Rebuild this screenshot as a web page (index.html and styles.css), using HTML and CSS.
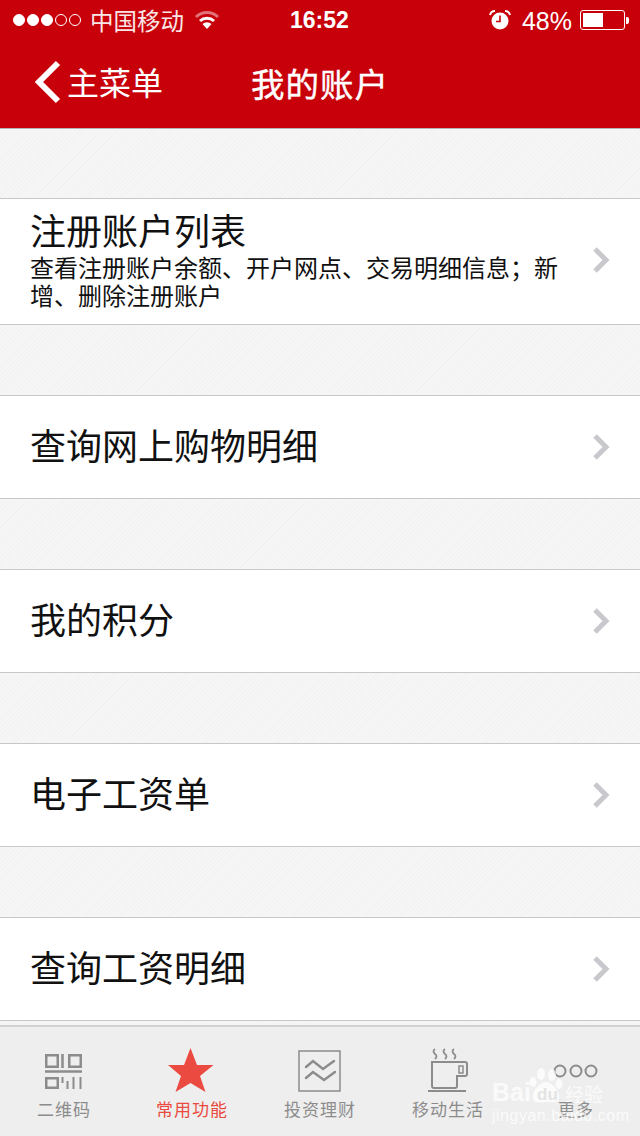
FILE: index.html
```html
<!DOCTYPE html>
<html lang="zh-CN">
<head>
  <meta charset="UTF-8">
  <title>我的账户</title>
  <link rel="stylesheet" href="styles.css">
</head>
<body>
  <div class="app">
    <div class="statusbar">
      <div class="status-left">
        <div class="signal">
          <span class="dot on"></span><span class="dot on"></span><span class="dot on"></span><span class="dot"></span><span class="dot"></span>
        </div>
        <span class="carrier">中国移动</span>
        <svg class="wifi" width="26" height="20" viewBox="0 0 26 20">
          <path d="M2 7 A16 16 0 0 1 24 7" fill="none" stroke="#fff" stroke-opacity="0.45" stroke-width="3"/>
          <path d="M6 11 A10.5 10.5 0 0 1 20 11" fill="none" stroke="#fff" stroke-width="3"/>
          <path d="M13 19 L8.5 14 A6.5 6.5 0 0 1 17.5 14 Z" fill="#fff"/>
        </svg>
      </div>
      <div class="clock">16:52</div>
      <div class="status-right">
        <svg class="alarm" width="22" height="20" viewBox="0 0 22 20">
          <circle cx="11" cy="11" r="8.5" fill="#fff"/>
          <path d="M11 5.5 V11.500 H7" fill="none" stroke="#c8000a" stroke-width="1.6"/>
          <path d="M1 5 Q2 1 6 1 M21 5 Q20 1 16 1" fill="none" stroke="#fff" stroke-width="2"/>
        </svg>
        <span class="percent">48%</span>
        <div class="battery"><div class="battery-fill"></div></div>
        <div class="battery-cap"></div>
      </div>
    </div>

    <div class="navbar">
      <div class="back">
        <svg width="28" height="44" viewBox="0 0 28 44">
          <path d="M25 3 L6 22 L25 41" fill="none" stroke="#fff" stroke-width="6"/>
        </svg>
        <span class="back-label">主菜单</span>
      </div>
      <h1 class="title">我的账户</h1>
    </div>

    <div class="content">
      <div class="row row-tall">
        <div class="row-text">
          <div class="row-title">注册账户列表</div>
          <div class="row-desc">查看注册账户余额、开户网点、交易明细信息；新增、删除注册账户</div>
        </div>
        <svg class="chevron" width="18" height="28" viewBox="0 0 18 28"><path d="M3 3 L14 14 L3 25" fill="none" stroke="#c8c8cd" stroke-width="5"/></svg>
      </div>
      <div class="row">
        <div class="row-title">查询网上购物明细</div>
        <svg class="chevron" width="18" height="28" viewBox="0 0 18 28"><path d="M3 3 L14 14 L3 25" fill="none" stroke="#c8c8cd" stroke-width="5"/></svg>
      </div>
      <div class="row">
        <div class="row-title">我的积分</div>
        <svg class="chevron" width="18" height="28" viewBox="0 0 18 28"><path d="M3 3 L14 14 L3 25" fill="none" stroke="#c8c8cd" stroke-width="5"/></svg>
      </div>
      <div class="row">
        <div class="row-title">电子工资单</div>
        <svg class="chevron" width="18" height="28" viewBox="0 0 18 28"><path d="M3 3 L14 14 L3 25" fill="none" stroke="#c8c8cd" stroke-width="5"/></svg>
      </div>
      <div class="row">
        <div class="row-title">查询工资明细</div>
        <svg class="chevron" width="18" height="28" viewBox="0 0 18 28"><path d="M3 3 L14 14 L3 25" fill="none" stroke="#c8c8cd" stroke-width="5"/></svg>
      </div>
    </div>

    <div class="tabbar">
      <div class="tab">
        <svg class="tab-icon" width="38" height="46" viewBox="0 0 38 46" fill="none" stroke="#8c8c8c" stroke-width="2.5">
          <rect x="1.250" y="7.250" width="11.500" height="11.500"/>
          <rect x="24.250" y="7.250" width="11.500" height="11.500"/>
          <path d="M17.500 6 V20 M0 23.500 H37"/>
          <rect x="1.250" y="30.250" width="11.500" height="9.500"/>
          <path d="M17.500 29 V35 M22.500 33 V41 M28.500 29 V41 M35.500 29 V41" stroke-width="2"/>
        </svg>
        <span class="tab-label">二维码</span>
      </div>
      <div class="tab tab-active">
        <svg class="tab-icon" width="48" height="46" viewBox="0 0 48 46"><path d="M22.500 0 L29 17 L45.500 17 L32 28 L37.500 44 L22.500 35 L7.500 44 L13 28 L0 17 L16 17 Z" fill="#ea4a40"/></svg>
        <span class="tab-label">常用功能</span>
      </div>
      <div class="tab">
        <svg class="tab-icon" width="44" height="46" viewBox="0 0 44 46" fill="none" stroke="#8c8c8c">
          <rect x="1" y="3" width="41" height="40" stroke-width="1.500"/>
          <path d="M8 19 L15 13 L25 21 L36 13 M8 30 L15 24 L26 32 L37 24" stroke-width="2.500" stroke-linecap="round"/>
        </svg>
        <span class="tab-label">投资理财</span>
      </div>
      <div class="tab">
        <svg class="tab-icon" width="40" height="46" viewBox="0 0 40 46" fill="none" stroke="#8c8c8c">
          <path d="M7 1 Q4 3 7 6 Q10 8 7 11 M17 1 Q14 3 17 6 Q20 8 17 11 M26 1 Q23 3 26 6 Q29 8 26 11" stroke-width="1.800"/>
          <path d="M4 14 H37 Q39 14 39 16 V26 Q39 28 37 28 H29 V38 Q29 40 27 40 H6 Q4 40 4 38 Z" stroke-width="2"/>
          <rect x="31" y="18" width="4" height="7" stroke-width="1.500"/>
          <path d="M0 43 H38" stroke-width="2"/>
        </svg>
        <span class="tab-label">移动生活</span>
      </div>
      <div class="tab">
        <svg class="tab-icon" width="48" height="46" viewBox="0 0 48 46" fill="none" stroke="#8c8c8c" stroke-width="2">
          <circle cx="8" cy="23" r="5.500"/><circle cx="24" cy="23" r="5.500"/><circle cx="39" cy="23" r="5.500"/>
        </svg>
        <span class="tab-label">更多</span>
      </div>
      <div class="watermark">
        <div class="wm-top">
          <span class="wm-bai">Bai</span>
          <svg class="wm-paw" width="36" height="36" viewBox="0 0 36 36" fill="#fff" fill-opacity="0.75">
            <ellipse cx="5" cy="14" rx="3.500" ry="5"/>
            <ellipse cx="13" cy="6" rx="4" ry="6"/>
            <ellipse cx="24" cy="7" rx="4" ry="6"/>
            <ellipse cx="31" cy="16" rx="3.500" ry="5"/>
            <path d="M18 14 C24 14 33 24 31 31 C29 36 22 34 18 34 C14 34 7 36 5 31 C3 24 12 14 18 14 Z"/>
          </svg>
          <span class="wm-du">du</span>
          <span class="wm-cn">经验</span>
        </div>
        <div class="wm-url">jingyan.baidu.com</div>
      </div>
    </div>
  </div>
</body>
</html>
```

FILE: styles.css
```css
* {
  box-sizing: border-box;
  margin: 0;
  padding: 0;
}
body {
  width: 640px;
  height: 1136px;
  overflow: hidden;
  font-family: "Liberation Sans", "Noto Sans CJK SC", sans-serif;
}
.app {
  width: 640px;
  height: 1136px;
  display: flex;
  flex-direction: column;
  background: #f1f1f1;
}
.statusbar {
  height: 40px;
  background: #c8000a;
  color: #fff;
  display: flex;
  align-items: center;
  position: relative;
  padding: 0 11px 0 13px;
  justify-content: space-between;
  font-size: 25px;
}
.status-left, .status-right {
  display: flex;
  align-items: center;
}
.signal {
  display: flex;
  gap: 2px;
}
.dot {
  width: 12px;
  height: 12px;
  border-radius: 50%;
  border: 1px solid #fff;
}
.dot.on {
  background: #fff;
}
.carrier {
  margin-left: 9px;
  font-size: 23.5px;
  opacity: 0.9;
}
.wifi {
  margin-left: 10px;
}
.clock {
  font-size: 23px;
  font-weight: bold;
  position: absolute;
  left: 290px;
  top: 7px;
}
.alarm {
  margin-right: 11px;
}
.percent {
  margin-top: 2px;
  margin-right: 8px;
}
.battery {
  width: 45px;
  height: 20px;
  border: 1px solid #fff;
  border-radius: 3px;
  padding: 2px;
}
.battery-fill {
  width: 20px;
  height: 100%;
  background: #fff;
}
.battery-cap {
  width: 3px;
  height: 7px;
  background: #fff;
  margin-left: 1px;
  border-radius: 0 2px 2px 0;
}
.navbar {
  height: 89px;
  background: #c8000a;
  color: #fff;
  border-bottom: 1px solid #b3b3b3;
  position: relative;
  display: flex;
  align-items: center;
  justify-content: center;
}
.back {
  position: absolute;
  left: 33px;
  top: 20px;
  display: flex;
  align-items: center;
  gap: 6px;
}
.back-label {
  font-size: 32px;
  margin-top: -2px;
}
.title {
  font-size: 33.5px;
  font-weight: normal;
  letter-spacing: 1px;
  -webkit-text-stroke: 0.4px #fff;
  margin-bottom: 4px;
}
.content {
  flex: 1;
  overflow: hidden;
  background-color: #f4f4f4;
  background-image: repeating-linear-gradient(135deg, #f2f2f2 0, #f2f2f2 1px, #f6f6f6 1px, #f6f6f6 3px);
  padding-top: 69px;
  border-bottom: 1px solid #d0d0d0;
}
.row {
  height: 104px;
  background: #fff;
  border-top: 1px solid #c8c8c8;
  border-bottom: 1px solid #c8c8c8;
  margin-bottom: 70px;
  padding: 0 30px 0 30px;
  display: flex;
  align-items: center;
  justify-content: space-between;
}
.row-tall {
  height: 127px;
}
.row-tall .chevron {
  margin-top: -3px;
}
.row-title {
  font-size: 36px;
  color: #111;
  margin-bottom: 7px;
}
.row-tall .row-title {
  line-height: 38px;
  margin-bottom: 3px;
}
.row-text {
  width: 530px;
  margin-top: 1px;
}
.row-desc {
  font-size: 24px;
  line-height: 28px;
  color: #111;
}
.chevron {
  flex-shrink: 0;
}
.tabbar {
  height: 110px;
  background: #eeeeee;
  border-top: 1px solid #d4d4d4;
  display: flex;
  position: relative;
}
.tab {
  width: 128px;
  display: flex;
  flex-direction: column;
  align-items: center;
  justify-content: flex-end;
  padding-bottom: 13px;
  gap: 4px;
}
.tab-icon {
  display: block;
}
.tab-label {
  font-size: 17px;
  line-height: 25px;
  letter-spacing: 1px;
  color: #8c8c8c;
}
.tab-active .tab-label {
  color: #ea4a40;
}
.watermark {
  position: absolute;
  left: 492px;
  top: 41px;
  width: 114px;
  color: rgba(255, 255, 255, 0.75);
}
.wm-top {
  display: flex;
  align-items: flex-end;
  height: 36px;
  position: relative;
}
.wm-bai {
  font-size: 25px;
  font-weight: bold;
  line-height: 24px;
}
.wm-paw {
  position: absolute;
  left: 36px;
  top: 0;
}
.wm-du {
  position: absolute;
  left: 45px;
  top: 17px;
  font-size: 17px;
  font-weight: bold;
  color: #e4e4e4;
}
.wm-cn {
  position: absolute;
  left: 73px;
  top: 12px;
  font-size: 19px;
  white-space: nowrap;
}
.wm-url {
  font-size: 16px;
  letter-spacing: 0.5px;
  margin-top: 3px;
  white-space: nowrap;
}
```
